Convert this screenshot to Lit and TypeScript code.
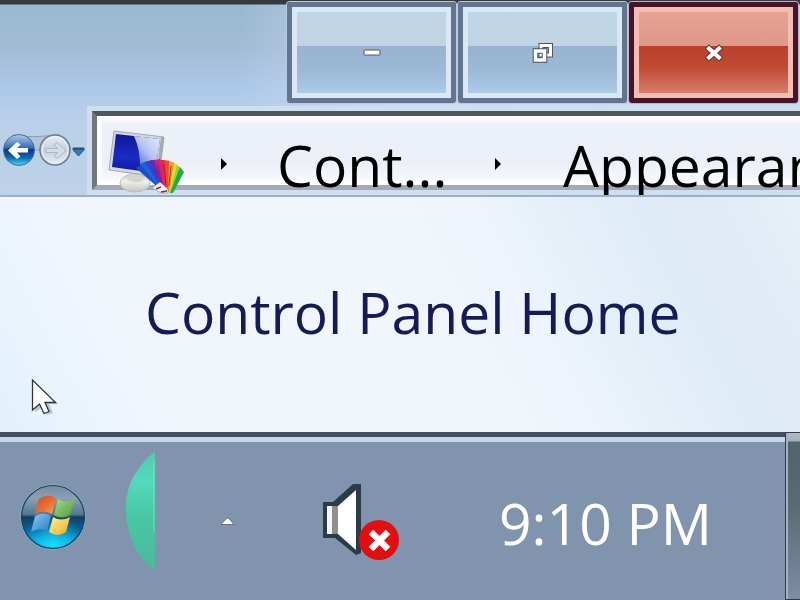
import { LitElement, html, css } from "lit";
import { customElement } from "lit/decorators.js";

@customElement("caption-buttons")
class CaptionButtons extends LitElement {
  static styles = css`
    :host { display: flex; justify-content: flex-end; gap: 2px; padding: 2px 2px 0 0; }
    button {
      box-sizing: border-box; width: 169px; height: 101px; margin: 0; padding: 0;
      display: flex; align-items: center; justify-content: center;
      border: 5px solid #62748e; border-radius: 3px;
      box-shadow: inset 0 0 0 5px #dae8f6, 0 0 0 1px #b9cbe4;
      background: linear-gradient(#bfd6e6 0, #bfd3e3 43%, #98b3cf 43%, #9cb9d6 70%, #b0cfec 100%);
    }
    .close {
      border-color: #451528;
      box-shadow: inset 0 0 0 5px #f3bdb3, 0 0 0 1px #b9b5ce;
      background: linear-gradient(#eaa394 0, #dd9889 43%, #bb4029 43%, #bf4a33 66%, #d98875 100%);
    }
    svg { display: block; }
  `;
  render() {
    return html`
      <button aria-label="Minimize">
        <svg width="18" height="8" viewBox="0 0 18 8"><rect x="1" y="1" width="16" height="5" rx="1" fill="#fff" stroke="#535666" stroke-width="1"/></svg>
      </button>
      <button aria-label="Restore">
        <svg width="22" height="22" viewBox="0 0 22 22" fill="none">
          <path d="M9 3.500H18.500V13H9Z" stroke="#4f5365" stroke-width="5"/>
          <path d="M9 3.500H18.500V13H9Z" stroke="#fff" stroke-width="3"/>
          <path d="M3.500 9H12.500V18H3.500Z" stroke="#4f5365" stroke-width="5.500"/>
          <path d="M3.500 9H12.500V18H3.500Z" stroke="#fff" stroke-width="3.500"/>
        </svg>
      </button>
      <button class="close" aria-label="Close">
        <svg width="20" height="18" viewBox="0 0 20 18" stroke-linecap="square">
          <path d="M5 4.500L15 13.500M15 4.500L5 13.500" stroke="#5a3c4c" stroke-width="6"/>
          <path d="M5 4.500L15 13.500M15 4.500L5 13.500" stroke="#fff" stroke-width="4"/>
        </svg>
      </button>
    `;
  }
}

@customElement("address-row")
class AddressRow extends LitElement {
  static styles = css`
    :host {
      display: flex; align-items: flex-start; box-sizing: border-box;
      height: 92px; padding-top: 8px; overflow: hidden; position: relative;
    }
    .history { flex: none; width: 92px; padding-top: 21px; }
    .history button { display: block; padding: 0; border: 0; background: none; }
    svg { display: block; }
    .bar {
      flex: 1; min-width: 0; box-sizing: border-box; height: 79px;
      display: flex; align-items: center;
      border: 5px solid #4e575c; border-right: 0;
      border-left-color: #71777f; border-bottom-color: #a1abb7;
      background: linear-gradient(#fff 0, #edf1f9 12%, #ebf0f8 70%, #f8fafc 94%, #fff 95%);
      box-shadow: inset 5px 0 0 #fcfdff, 0 0 0 5px #d0dff0;
    }
    .icon { flex: none; margin: 21px 35px 0 10px; }
    .arrow { flex: none; margin-top: 26px; }
    .crumb {
      flex: none; margin: 28px 0 0 49px; font: 57px/80px "Open Sans", sans-serif;
      color: #000; text-decoration: none;
    }
    .first { width: 217px; }
    .last { margin-left: 61px; }
  `;
  arrow() {
    return html`<svg class="arrow" width="8" height="12" viewBox="0 0 8 12"><path d="M1 0L7 6L1 12Z" fill="#000"/></svg>`;
  }
  render() {
    return html`
      <div class="history">
        <button aria-label="Back and forward">
          <svg width="88" height="40" viewBox="0 0 88 40">
            <defs>
              <linearGradient id="b" x2="0" y2="1"><stop offset="0" stop-color="#b2cceb"/><stop offset=".42" stop-color="#356eb7"/><stop offset=".5" stop-color="#0d3687"/><stop offset=".75" stop-color="#086db1"/><stop offset="1" stop-color="#42e0fa"/></linearGradient>
              <linearGradient id="f" x2="0" y2="1"><stop offset="0" stop-color="#e8eff7"/><stop offset=".5" stop-color="#c6d1dd"/><stop offset="1" stop-color="#e5edf5"/></linearGradient>
            </defs>
            <path d="M14 3Q28 5 37 4.500Q47 4 60 3L55 18H19Z" fill="#b0c4da" stroke="#8a9db3"/>
            <circle cx="19" cy="18" r="15.500" fill="url(#b)" stroke="#4a6a92"/>
            <path d="M8 18.500L17 10L20.500 12.500L17 16H28V20.500H17L20.500 24.500L17 27Z" fill="#fff"/>
            <circle cx="55" cy="18" r="15" fill="url(#f)" stroke="#6f7b8a" stroke-width="1.500"/>
            <circle cx="55" cy="18" r="13" fill="none" stroke="#e9f1f8"/>
            <path d="M66 18.500L57 10.500L54 13L58 16.500H46V20.500H58L54 24L57 26.500Z" fill="#d5dee8" stroke="#a9b6c5"/>
            <path d="M73 16H84V18L78.500 24L73 18Z" fill="#377ba9" stroke="#24537e"/><path d="M74 17H83" stroke="#183c66"/>
          </svg>
        </button>
      </div>
      <nav class="bar" aria-label="Address">
        <svg class="icon" width="78" height="66" viewBox="0 0 78 66">
          <defs>
            <linearGradient id="s" x1=".3" y1="0" x2=".2" y2="1"><stop offset="0" stop-color="#10189a"/><stop offset=".6" stop-color="#1a2cc4"/><stop offset="1" stop-color="#10159a"/></linearGradient>
            <linearGradient id="h" x1="1" y1="0" x2=".2" y2="1"><stop offset="0" stop-color="#e6edff"/><stop offset=".5" stop-color="#b3c2f1"/><stop offset="1" stop-color="#4158cf"/></linearGradient>
            <linearGradient id="d" x2="0" y2="1"><stop offset="0" stop-color="#bfc1bd"/><stop offset=".4" stop-color="#f0f1ea"/><stop offset="1" stop-color="#c2c4c3"/></linearGradient>
          </defs>
          <ellipse cx="28" cy="55" rx="15" ry="9" fill="url(#d)" stroke="#bbbdbc"/>
          <path d="M22 43L35 45L36 53Q28 56 21 52Z" fill="#d4d6d0"/>
          <path d="M7 3L57 9L52 49L2 42Z" fill="#d5d9d8" stroke="#a2a8ac"/>
          <path d="M54 9L57 9L52 49L49 48Z" fill="#a4aaae"/>
          <path d="M9 6L53 11L48 45L5 39Z" fill="url(#s)"/>
          <path d="M27 8L53 11L48 45L33 43Q34 23 27 8Z" fill="url(#h)"/>
          <path d="M55 63L29 40L36 35L60 61Z" fill="#1650c4"/>
          <path d="M55 63L33 36L40 33L60 61Z" fill="#245fe0"/>
          <path d="M56 63L38 34L45 32L61 61Z" fill="#2a46cc"/>
          <path d="M57 63L43 32L48 32L62 61Z" fill="#6a28ae"/>
          <path d="M58 63L47 32L53 31L62 61Z" fill="#cc1d92"/>
          <path d="M59 63L52 32L58 32L63 62Z" fill="#e8254c"/>
          <path d="M60 63L57 32L63 33L64 62Z" fill="#f14a2b"/>
          <path d="M61 64L62 33L68 35L65 63Z" fill="#f39a22"/>
          <path d="M62 65L67 35L71 37L65 64Z" fill="#efd82b"/>
          <path d="M63 65L70 37L74 40L66 64Z" fill="#94d432"/>
          <path d="M63 65L73 39L77 44L66 65Z" fill="#24a947"/>
          <path d="M55 57L51 37M59 57L57 36M62 58L64 38" stroke="#8c1c4c" stroke-width=".8"/>
          <path d="M45 60L53 54L61 61L61 65L54 65Z" fill="#f1edf3" stroke="#8c778e" stroke-width=".5"/>
          <path d="M49 61L54 59M54 64L60 63" stroke="#7f304f" stroke-width="1.500"/>
        </svg>
        ${this.arrow()}
        <a class="crumb first" href="#">Cont...</a>
        ${this.arrow()}
        <a class="crumb last" href="#">Appearance</a>
      </nav>
    `;
  }
}

@customElement("task-bar")
class TaskBar extends LitElement {
  static styles = css`
    :host {
      display: flex; align-items: center; box-sizing: border-box; height: 168px;
      border-top: 5px solid #434e5e; box-shadow: inset 0 5px 0 #c7d7eb;
      background: #8095ad;
    }
    svg { display: block; }
    button { flex: none; display: block; padding: 0; border: 0; background: none; }
    .start { margin: 0 0 4px 20px; }
    .app { margin: 0 0 16px 39px; }
    .more { margin: 5px 0 0 65px; }
    .sound { margin: 8px 0 0 86px; }
    .clock { margin: 8px auto 0 98px; font: 57px/80px "Open Sans", sans-serif; color: #fff; white-space: nowrap; }
    .desktop {
      align-self: stretch; width: 15px; margin-top: -5px; box-sizing: border-box;
      border: 1px solid #323b47; border-right: 0;
      box-shadow: inset 2px 0 0 #a4b3c1;
      background: linear-gradient(#b0bdc9 0, #a3b0bb 8px, #53636d 9px, #5b6b76 45%, #7d8da3 100%);
    }
  `;
  render() {
    return html`
      <button class="start" aria-label="Start">
        <svg width="66" height="66" viewBox="0 0 66 66">
          <defs>
            <linearGradient id="o" x2="0" y2="1"><stop offset="0" stop-color="#728ca3"/><stop offset=".2" stop-color="#8ba1b3"/><stop offset=".46" stop-color="#507994"/><stop offset=".5" stop-color="#123e62"/><stop offset=".72" stop-color="#06669c"/><stop offset="1" stop-color="#0ac9fa"/></linearGradient>
            <radialGradient id="gl" cx=".5" cy="1" r=".55"><stop offset="0" stop-color="#16e2ff"/><stop offset="1" stop-color="#16b4ef" stop-opacity="0"/></radialGradient>
            <linearGradient id="r" x2="1" y2="1"><stop offset="0" stop-color="#d7441e"/><stop offset=".6" stop-color="#ed7335"/><stop offset="1" stop-color="#f5ac65"/></linearGradient>
            <linearGradient id="g" x2="1" y2="1"><stop offset="0" stop-color="#b0d98c"/><stop offset="1" stop-color="#479a37"/></linearGradient>
            <linearGradient id="bl" x2="1" y2="1"><stop offset="0" stop-color="#91caf1"/><stop offset="1" stop-color="#237bc5"/></linearGradient>
            <linearGradient id="y" x2="1" y2="1"><stop offset="0" stop-color="#fff4a4"/><stop offset="1" stop-color="#f1a90f"/></linearGradient>
          </defs>
          <circle cx="33" cy="33" r="32.500" fill="#b2cbdc"/>
          <circle cx="33" cy="33" r="31.500" fill="url(#o)" stroke="#173c61" stroke-width="1.200"/>
          <circle cx="33" cy="33" r="30" fill="url(#gl)"/>
          <path d="M19 15Q27 9 36 14L32 30Q23 25 15 30Z" fill="url(#r)"/>
          <path d="M38 15Q46 20 55 15L50 31Q42 36 34 31Z" fill="url(#g)"/>
          <path d="M15 32Q23 27 31 32L27 47Q19 43 11 48Z" fill="url(#bl)"/>
          <path d="M33 33Q41 38 50 33L46 48Q37 54 29 48Z" fill="url(#y)"/>
        </svg>
      </button>
      <svg class="app" width="30" height="120" viewBox="0 0 30 120">
        <defs><linearGradient id="t" x2="0" y2="1"><stop offset="0" stop-color="#56c9b1"/><stop offset=".25" stop-color="#53d9bb"/><stop offset=".55" stop-color="#4ac7a3"/><stop offset="1" stop-color="#4ab99f"/></linearGradient></defs>
        <path d="M30 1C21 7 7 23 3 40Q-2 60 4 80C9 99 20 114 30 119Z" fill="url(#t)"/>
        <path d="M29 10V80" stroke="#9be9d4" stroke-width="2" opacity=".3"/>
      </svg>
      <button class="more" aria-label="Show hidden icons">
        <svg width="15" height="10" viewBox="0 0 15 10"><path d="M1 8.500H14L8.500 2H7Z" fill="#fff" stroke="#52606f" stroke-width=".8"/></svg>
      </button>
      <button class="sound" aria-label="Volume">
        <svg width="80" height="80" viewBox="0 0 80 80">
          <path d="M2 19H12L32 1H40V70L35 72L14 55H2Z" fill="#2b3b48"/>
          <path d="M6 23H17L35 7V67L17 51H6Z" fill="#fff"/>
          <path d="M11 23H17V51H11Z" fill="#918f8e"/>
          <path d="M6 23H11V51H6Z" fill="#f4f8fa"/>
          <circle cx="58" cy="57" r="20" fill="#e30e10"/>
          <path d="M50 49L67 66M67 49L50 66" stroke="#fff" stroke-width="6.500"/>
        </svg>
      </button>
      <div class="clock">9:10 PM</div>
      <button class="desktop" aria-label="Show desktop"></button>
    `;
  }
}

@customElement("app-root")
class AppRoot extends LitElement {
  static styles = css`
    :host { display: flex; flex-direction: column; min-height: 100vh; position: relative; overflow: hidden; }
    header {
      border-bottom: 2px solid #9dafc2;
      background:
        linear-gradient(#363a40 0, #363a40 4px, transparent 5px),
        linear-gradient(90deg, transparent 30%, rgba(214, 224, 246, .7) 50%, rgba(204, 230, 242, .7) 100%),
        linear-gradient(#97b8cf 0, #a3bcd6 25%, #adc9e8 46%, #b9d0e8 60%, #bdd2e8 100%);
    }
    main {
      flex: 1; display: flex; align-items: center; padding: 0 20px 6px 145px;
      background:
        linear-gradient(62deg, #e3f1fc 0, rgba(240, 246, 254, 0) 16%),
        linear-gradient(62deg, #eff5fd 0, #f1f6fb 45%, #eff5fc 62%, #e0ecf7 80%, #dfeaf5 88%, #e8f0f8 100%);
    }
    .home { font: 57px/80px "Open Sans", sans-serif; color: #151c55; text-decoration: none; white-space: nowrap; }
    .cursor { position: absolute; left: 31px; top: 378px; }
  `;
  render() {
    return html`
      <header>
        <caption-buttons></caption-buttons>
        <address-row></address-row>
      </header>
      <main><a class="home" href="#">Control Panel Home</a></main>
      <task-bar></task-bar>
      <svg class="cursor" width="30" height="40" viewBox="0 0 30 40">
        <path d="M4 5L27 26H18L22 35L16 37L12 29L4 34Z" fill="#687684" opacity=".35"/>
        <path d="M1.500 2V32L8.500 26L13 35.500L18 33.500L14 24.500H24.500Z" fill="#fff" stroke="#30343a" stroke-width="1.300"/>
      </svg>
    `;
  }
}
